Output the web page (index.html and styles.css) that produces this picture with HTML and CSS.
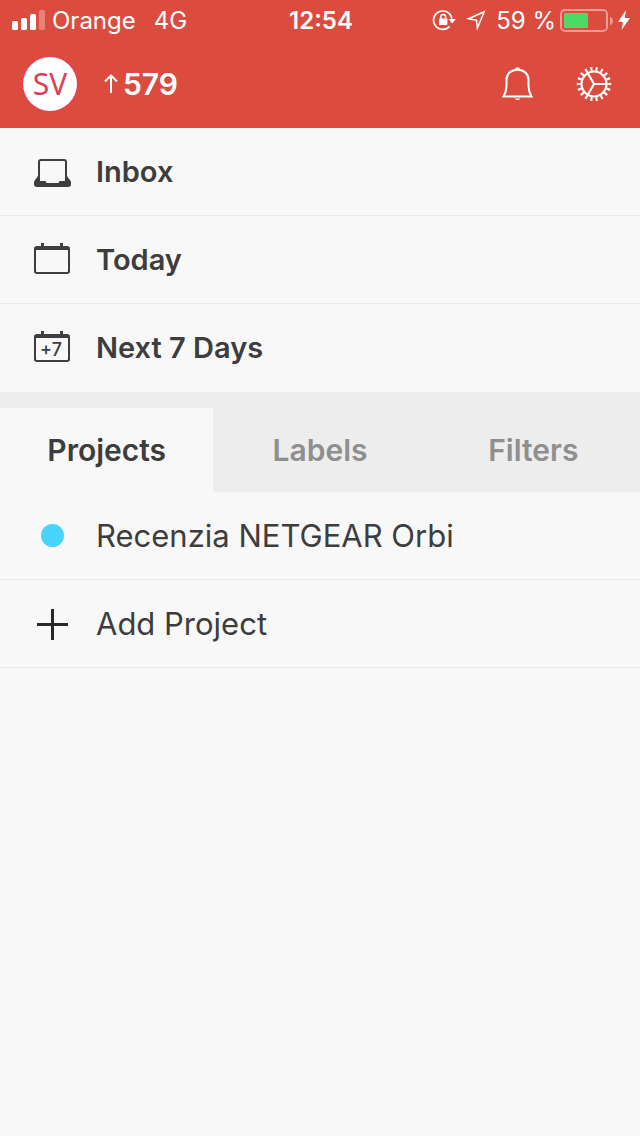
FILE: index.html
```
<!DOCTYPE html>
<html lang="en">

<head>
	<title>Todoist</title>
	<meta charset="utf-8">
	<meta name="viewport" content="width=device-width, initial-scale=1">
	<link rel="stylesheet" href="styles.css">
</head>

<body>
	<header>
		<div class="status-bar">
			<div class="status-left">
				<svg class="signal" width="34" height="22" viewBox="0 0 34 22" fill="#fff">
					<rect x="0" y="11" width="6" height="9" rx="1.5"/>
					<rect x="9" y="8" width="6" height="12" rx="1.5"/>
					<rect x="18" y="4" width="6" height="16" rx="1.5"/>
					<rect x="27" y="0" width="6" height="20" rx="1.5" opacity="0.3"/>
				</svg>
				<span>Orange</span>
				<span class="network">4G</span>
			</div>
			<time class="clock">12:54</time>
			<div class="status-right">
				<svg width="24" height="24" viewBox="0 0 24 24" fill="none" stroke="#fff" stroke-width="1.7">
					<path d="M19.8 9.5A9.2 9.2 0 1 0 17.6 17.4"/>
					<path d="M16.6 10h7.2l-3.6 4.4z" fill="#fff" stroke="none"/>
					<rect x="7" y="9.5" width="8.4" height="6.5" rx="0.8" fill="#fff" stroke="none"/>
					<path d="M8.8 10V7.8a2.4 2.4 0 0 1 4.8 0V10" stroke-width="1.5"/>
				</svg>
				<svg class="location" width="24" height="24" viewBox="0 0 24 24" fill="none" stroke="#fff" stroke-width="1.5">
					<path d="M20.2 2.8L4.5 9.8l8 1.4.9 7.8z"/>
				</svg>
				<span class="percent">59 %</span>
				<svg width="54" height="24" viewBox="0 0 54 24">
					<rect x="1" y="1" width="46" height="21" rx="4" fill="none" stroke="#fff" stroke-width="2" opacity="0.45"/>
					<rect x="4" y="4" width="24" height="15" rx="1" fill="#4cd964"/>
					<path d="M50 8c4 1 4 7 0 8z" fill="#fff" opacity="0.45"/>
				</svg>
				<svg class="bolt" width="12" height="22" viewBox="0 0 12 22" fill="#fff">
					<path d="M8 0L0 12h5L3.5 20 12 8H6.7z"/>
				</svg>
			</div>
		</div>

		<div class="toolbar">
			<a class="avatar" href="#profile">SV</a>
			<a class="karma" href="#karma">
				<svg width="14" height="20" viewBox="0 0 14 20" fill="none" stroke="#fff" stroke-width="2">
					<path d="M7 19V2M1 7.5l6-6 6 6"/>
				</svg>
				579
			</a>
			<button class="tool" type="button" aria-label="Notifications">
				<svg width="36" height="36" viewBox="0 0 36 36" fill="none" stroke="#fff" stroke-width="2">
					<path d="M3.5 30.5C5.5 27 6.5 24 6.5 20v-6C6.5 8 11 3.7 17.5 3.7S28.500 8 28.500 14v6c0 4 1 7 3 10.500z"/>
					<path d="M15.500 3.200a2 1.800 0 0 1 4 0z" fill="#fff" stroke="none"/>
					<path d="M15.500 2.700h4" stroke-width="2"/>
					<path d="M14.800 32.500h5.400c-.9 2-4.500 2-5.400 0z" fill="#fff" stroke="none"/>
				</svg>
			</button>
			<button class="tool" type="button" aria-label="Settings">
				<svg width="36" height="36" viewBox="0 0 36 36" fill="none" stroke="#fff" stroke-width="2">
					<circle cx="18" cy="18" r="12.5" stroke-width="2.2"/>
					<!-- 18 teeth, one dash each 20 degrees -->
					<circle cx="18" cy="18" r="15.2" stroke-width="4" pathLength="180" stroke-dasharray="4 6" stroke-dashoffset="2"/>
					<path d="M31 18H18L11.5 6.7M18 18l-6.5 11.3" stroke-width="2.2"/>
				</svg>
			</button>
		</div>
	</header>

	<main>
		<nav>
			<ul class="list views">
				<li>
					<a href="#inbox">
						<svg width="40" height="40" viewBox="0 0 40 40" fill="#3d3d3d">
							<rect x="7" y="8" width="27" height="24" rx="2" fill="none" stroke="#3d3d3d" stroke-width="2"/>
							<path d="M7 22v7h6q1 0 1 1t1 1h11q1 0 1-1t1-1h6v-7q2 4 4 6 1 1 1 3v1q0 3-3 3H5q-3 0-3-3v-1q0-2 1-3 2-2 4-6z"/>
						</svg>
						Inbox
					</a>
				</li>
				<li>
					<a href="#today">
						<svg width="40" height="40" viewBox="0 0 40 40" fill="#3d3d3d">
							<rect x="3" y="7" width="34" height="26" rx="2" fill="none" stroke="#3d3d3d" stroke-width="2"/>
							<path d="M3 7h34v3H3zM9 3h3v4H9zM28 3h3v4h-3z"/>
						</svg>
						Today
					</a>
				</li>
				<li>
					<a href="#next-7-days">
						<svg width="40" height="40" viewBox="0 0 40 40" fill="#3d3d3d">
							<rect x="3" y="7" width="34" height="26" rx="2" fill="none" stroke="#3d3d3d" stroke-width="2"/>
							<path d="M3 7h34v3H3zM9 3h3v4H9zM28 3h3v4h-3z"/>
							<text class="icon-text" x="19" y="28" text-anchor="middle">+7</text>
						</svg>
						Next 7 Days
					</a>
				</li>
			</ul>
		</nav>

		<div class="tabs" role="tablist">
			<button class="tab active" type="button" role="tab" aria-selected="true">Projects</button>
			<button class="tab" type="button" role="tab" aria-selected="false">Labels</button>
			<button class="tab" type="button" role="tab" aria-selected="false">Filters</button>
		</div>

		<ul class="list projects">
			<li>
				<a href="#project">
					<svg width="40" height="40" viewBox="0 0 40 40">
						<circle cx="20.5" cy="19.5" r="11.5" fill="#48d4fc"/>
					</svg>
					Recenzia NETGEAR Orbi
				</a>
			</li>
			<li>
				<button type="button">
					<svg width="40" height="40" viewBox="0 0 40 40" stroke="#282828" stroke-width="3">
						<path d="M5 20.5h31M20.5 5v31"/>
					</svg>
					Add Project
				</button>
			</li>
		</ul>
	</main>
</body>
</html>
```
FILE: styles.css
```
* {
	box-sizing: border-box;
	margin: 0;
	padding: 0;
}

body {
	font-family: Inter, 'Liberation Sans', sans-serif;
	background: #f8f8f8;
	color: #3d3d3d;
}

a {
	color: inherit;
	text-decoration: none;
}

button {
	font: inherit;
	color: inherit;
	background: none;
	border: none;
	cursor: pointer;
}

svg {
	display: block;
	flex: none;
}

header {
	background: #db4c3f;
	color: white;
}

/* status bar */

.status-bar {
	display: grid;
	grid-template-columns: 1fr auto 1fr;
	align-items: center;
	height: 40px;
	padding: 2px 10px 0 12px;
	font-size: 24px;
	line-height: 38px;
	white-space: nowrap;
}

.status-left {
	display: flex;
	align-items: center;
	gap: 6px;
}

.network {
	margin-left: 12px;
}

.clock {
	font-weight: 600;
}

.status-right {
	display: flex;
	align-items: center;
	justify-content: flex-end;
	gap: 4px;
}

.location {
	margin-left: 4px;
}

.percent {
	margin-left: 4px;
}

/* toolbar */

.toolbar {
	display: flex;
	align-items: center;
	height: 88px;
	padding: 0 20px 0 23px;
}

.avatar {
	width: 54px;
	height: 54px;
	border-radius: 50%;
	background: white;
	box-shadow: 0 0 2px 1px #ec3b5c;
	color: #dc3f58;
	font-family: 'Noto Sans', sans-serif;
	font-size: 30px;
	line-height: 54px;
	text-align: center;
}

.karma {
	display: flex;
	align-items: center;
	gap: 5px;
	margin-left: 27px;
	margin-right: auto;
	font-size: 30px;
	font-weight: 600;
}

.tool {
	padding: 8px;
}

.tool + .tool {
	margin-left: 24px;
}

/* lists */

.list {
	list-style: none;
}

.list li {
	border-bottom: 1px solid #ebebeb;
}

.list a,
.list button {
	display: flex;
	align-items: center;
	gap: 24px;
	width: 100%;
	padding: 24px 32px 23px 32px;
	line-height: 40px;
	text-align: left;
}

.views {
	font-size: 29px;
	font-weight: 600;
}

.views li:last-child {
	border-color: transparent;
}

.projects {
	font-size: 31px;
}

.icon-text {
	font-size: 18px;
	font-weight: 500;
}

/* tabs */

.tabs {
	display: grid;
	grid-template-columns: repeat(3, 1fr);
	padding-top: 16px;
	background: #ededed;
}

.tab {
	padding: 22px 0;
	font-size: 30px;
	font-weight: 600;
	line-height: 40px;
	color: #8f8f8f;
}

.tab.active {
	background: #f8f8f8;
	color: #3d3d3d;
}
```
